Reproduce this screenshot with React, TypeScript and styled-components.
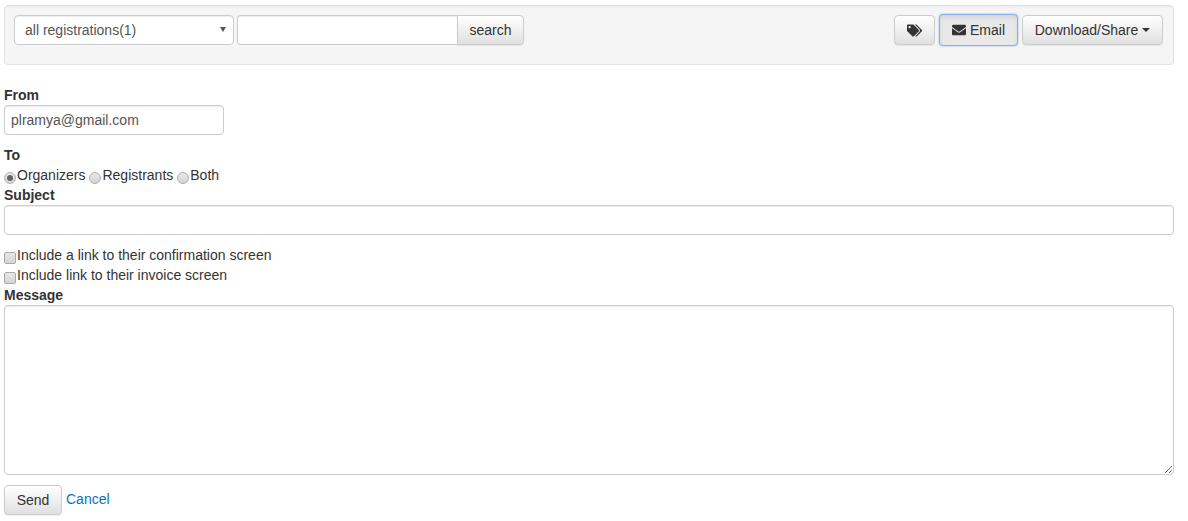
import React from "react";
import styled, { createGlobalStyle } from "styled-components";
import { FaEnvelope, FaTags } from "react-icons/fa";

const GlobalStyle = createGlobalStyle`
  * {
    box-sizing: border-box;
  }
  body {
    margin: 0;
    background: #fff;
    color: #333;
    font-family: "Liberation Sans", Arial, sans-serif;
    font-size: 14px;
    line-height: 20px;
  }
`;

function App() {
  return (
    <Page>
      <GlobalStyle />
      <Well>
        <SelectWrap>
          <FilterSelect defaultValue="all">
            <option value="all">all registrations(1)</option>
          </FilterSelect>
        </SelectWrap>
        <SearchGroup>
          <SearchInput type="text" />
          <SearchButton type="button">search</SearchButton>
        </SearchGroup>
        <Actions>
          <Button type="button" aria-label="tags">
            <FaTags size={15} />
          </Button>
          <EmailButton type="button">
            <FaEnvelope size={14} />
            Email
          </EmailButton>
          <DownloadButton type="button">
            Download/Share
            <Caret />
          </DownloadButton>
        </Actions>
      </Well>
      <Form>
        <Label>From</Label>
        <TextInput type="text" $width={220} defaultValue="plramya@gmail.com" />
        <Label $top={10}>To</Label>
        <Row>
          <Choice>
            <Radio name="to" defaultChecked />
            Organizers
          </Choice>
          <Choice>
            <Radio name="to" />
            Registrants
          </Choice>
          <Choice>
            <Radio name="to" />
            Both
          </Choice>
        </Row>
        <Label>Subject</Label>
        <TextInput type="text" />
        <Row $top={10}>
          <Choice>
            <Check />
            Include a link to their confirmation screen
          </Choice>
        </Row>
        <Row>
          <Choice>
            <Check />
            Include link to their invoice screen
          </Choice>
        </Row>
        <Label>Message</Label>
        <MessageBox />
        <Footer>
          <SendButton type="button">Send</SendButton>
          <CancelLink href="#">Cancel</CancelLink>
        </Footer>
      </Form>
    </Page>
  );
}

export default App;

const Page = styled.div`
  padding: 5px 14px 6px 4px;
`;

const Well = styled.div`
  display: flex;
  align-items: flex-start;
  height: 60px;
  padding: 9px 10px 9px 9px;
  background: #f5f5f5;
  border: 1px solid #e3e3e3;
  border-radius: 4px;
  box-shadow: inset 0 1px 1px rgba(0, 0, 0, 0.05);
`;

const SelectWrap = styled.div`
  position: relative;
  width: 220px;
  height: 30px;
  margin-right: 3px;
  &::after {
    content: "";
    position: absolute;
    top: 12px;
    right: 8px;
    border-top: 5px solid #555;
    border-left: 3px solid transparent;
    border-right: 3px solid transparent;
  }
`;

const FilterSelect = styled.select`
  appearance: none;
  display: block;
  width: 100%;
  height: 30px;
  padding: 0 20px 0 10px;
  background: #fff;
  border: 1px solid #ccc;
  border-radius: 4px;
  box-shadow: inset 0 1px 1px rgba(0, 0, 0, 0.075);
  color: #555;
  font: inherit;
`;

const SearchGroup = styled.div`
  display: flex;
`;

const SearchInput = styled.input`
  width: 220px;
  height: 30px;
  padding: 0 10px;
  background: #fff;
  border: 1px solid #ccc;
  border-right: 0;
  border-radius: 4px 0 0 4px;
  box-shadow: inset 0 1px 1px rgba(0, 0, 0, 0.075);
  font: inherit;
`;

const Button = styled.button`
  display: inline-flex;
  align-items: center;
  justify-content: center;
  height: 30px;
  padding: 0 12px;
  background: linear-gradient(to bottom, #fff 0, #e0e0e0 100%);
  border: 1px solid #ccc;
  border-radius: 4px;
  box-shadow: inset 0 1px 0 rgba(255, 255, 255, 0.15), 0 1px 1px rgba(0, 0, 0, 0.075);
  color: #333;
  font: inherit;
  white-space: nowrap;
`;

const SearchButton = styled(Button)`
  width: 67px;
  border-radius: 0 4px 4px 0;
`;

const Actions = styled.div`
  display: flex;
  align-items: center;
  gap: 4px;
  margin-top: -1px;
  margin-left: auto;
`;

const EmailButton = styled(Button)`
  gap: 4px;
  width: 79px;
  height: 32px;
  padding: 0;
  background: #e8e8e8;
  border-color: #8ab0ea;
  box-shadow: inset 0 3px 5px rgba(0, 0, 0, 0.08), 0 0 2px rgba(90, 140, 240, 0.7);
`;

const DownloadButton = styled(Button)`
  width: 141px;
  padding: 0;
`;

const Caret = styled.span`
  margin-left: 4px;
  border-top: 4px solid #333;
  border-left: 4px solid transparent;
  border-right: 4px solid transparent;
`;

const Form = styled.form`
  margin-top: 20px;
`;

const Label = styled.div<{ $top?: number }>`
  margin-top: ${(p) => p.$top ?? 0}px;
  font-weight: bold;
`;

const TextInput = styled.input<{ $width?: number }>`
  display: block;
  width: ${(p) => (p.$width ? `${p.$width}px` : "100%")};
  height: 30px;
  padding: 0 6px;
  background: #fff;
  border: 1px solid #ccc;
  border-radius: 4px;
  box-shadow: inset 0 1px 1px rgba(0, 0, 0, 0.075);
  color: #555;
  font: inherit;
`;

const Row = styled.div<{ $top?: number }>`
  display: flex;
  gap: 4px;
  height: 20px;
  margin-top: ${(p) => p.$top ?? 0}px;
`;

const Choice = styled.label`
  display: inline-flex;
  align-items: flex-start;
`;

const Radio = styled.input.attrs({ type: "radio" })`
  appearance: none;
  flex: none;
  position: relative;
  width: 12px;
  height: 12px;
  margin: 7px 1px 0 0;
  background: linear-gradient(to bottom, #e8e8e8, #d4d4d4);
  border: 1px solid #b0b0b0;
  border-radius: 50%;
  &:checked::after {
    content: "";
    position: absolute;
    inset: 2px;
    background: #666;
    border-radius: 50%;
  }
`;

const Check = styled.input.attrs({ type: "checkbox" })`
  appearance: none;
  flex: none;
  width: 12px;
  height: 12px;
  margin: 7px 1px 0 0;
  background: linear-gradient(to bottom, #e8e8e8, #d4d4d4);
  border: 1px solid #aaa;
  border-radius: 2px;
`;

const MessageBox = styled.textarea`
  display: block;
  width: 100%;
  height: 170px;
  padding: 6px;
  background: #fff;
  border: 1px solid #ccc;
  border-radius: 4px;
  box-shadow: inset 0 1px 1px rgba(0, 0, 0, 0.075);
  font: inherit;
`;

const Footer = styled.div`
  display: flex;
  align-items: flex-start;
  gap: 4px;
  margin-top: 10px;
`;

const SendButton = styled(Button)`
  width: 58px;
`;

const CancelLink = styled.a`
  color: #0a73b5;
  text-decoration: none;
  line-height: 28px;
`;
